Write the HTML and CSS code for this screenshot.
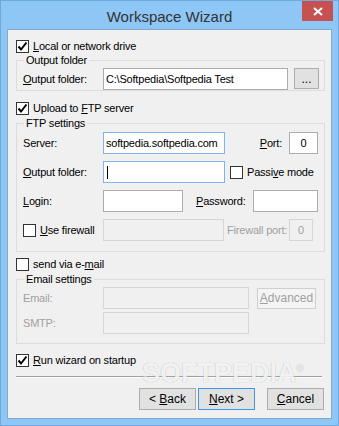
FILE: index.html
```html
<!DOCTYPE html>
<html lang="en">
<head>
  <meta charset="UTF-8">
  <title>Workspace Wizard</title>
  <link rel="stylesheet" href="styles.css">
</head>
<body>
  <div class="window">
    <!-- Title bar -->
    <div class="titlebar">
      <span class="title">Workspace Wizard</span>
      <span class="close">
        <svg width="10" height="9" viewBox="0 0 10 9"><path d="M1 1 L9 8 M9 1 L1 8" stroke="#fff" stroke-width="2"/></svg>
      </span>
    </div>

    <div class="client">
      <!-- Local drive -->
      <div class="check mt-10">
        <span class="box checked"><svg width="11" height="11" viewBox="0 0 11 11"><path d="M1.5 5.5 L4 8.5 L9.5 1.5" fill="none" stroke="#000" stroke-width="2"/></svg></span>
        <span><u>L</u>ocal or network drive</span>
      </div>
      <div class="group mt-7 group-local">
        <span class="legend">Output folder</span>
        <div class="row">
          <span class="lbl"><u>O</u>utput folder:</span>
          <input class="field w-185" type="text" value="C:\Softpedia\Softpedia Test">
          <button class="btn btn-browse">...</button>
        </div>
      </div>

      <!-- FTP -->
      <div class="check mt-11">
        <span class="box checked"><svg width="11" height="11" viewBox="0 0 11 11"><path d="M1.5 5.5 L4 8.5 L9.5 1.5" fill="none" stroke="#000" stroke-width="2"/></svg></span>
        <span>Upload to <u>F</u>TP server</span>
      </div>
      <div class="group mt-8 group-ftp">
        <span class="legend">FTP settings</span>
        <div class="row">
          <span class="lbl">Server:</span>
          <input class="field focus w-122" type="text" value="softpedia.softpedia.com">
          <span class="port-lbl"><u>P</u>ort:</span>
          <input class="field center w-29" type="text" value="0">
        </div>
        <div class="row">
          <span class="lbl"><u>O</u>utput folder:</span>
          <div class="field focus w-122"><span class="caret"></span></div>
          <div class="check passive">
            <span class="box"></span>
            <span>Passi<u>v</u>e mode</span>
          </div>
        </div>
        <div class="row">
          <span class="lbl"><u>L</u>ogin:</span>
          <input class="field w-80" type="text" value="">
          <span class="pw-lbl"><u>P</u>assword:</span>
          <input class="field w-65" type="password" value="">
        </div>
        <div class="row">
          <div class="check lbl">
            <span class="box"></span>
            <span><u>U</u>se firewall</span>
          </div>
          <input class="field w-121" type="text" value="" disabled>
          <span class="fw-lbl disabled">Firewall port:</span>
          <input class="field center w-24" type="text" value="0" disabled>
        </div>
      </div>

      <!-- Email -->
      <div class="check mt-6">
        <span class="box"></span>
        <span>send via e-<u>m</u>ail</span>
      </div>
      <div class="group mt-8 group-mail">
        <span class="legend">Email settings</span>
        <div class="row">
          <span class="lbl disabled">Email:</span>
          <input class="field w-146" type="text" value="" disabled>
          <button class="btn btn-adv" disabled><u>A</u>dvanced</button>
        </div>
        <div class="row">
          <span class="lbl disabled">SMTP:</span>
          <input class="field w-146" type="text" value="" disabled>
        </div>
      </div>

      <div class="check mt-10">
        <span class="box checked"><svg width="11" height="11" viewBox="0 0 11 11"><path d="M1.5 5.5 L4 8.5 L9.5 1.5" fill="none" stroke="#000" stroke-width="2"/></svg></span>
        <span><u>R</u>un wizard on startup</span>
      </div>

      <div class="separator"></div>

      <div class="buttons">
        <button class="btn">&lt; <u>B</u>ack</button>
        <button class="btn btn-default"><u>N</u>ext &gt;</button>
        <button class="btn btn-cancel"><u>C</u>ancel</button>
      </div>

      <div class="watermark">SOFTPEDIA<sup>®</sup></div>
    </div>
  </div>
</body>
</html>
```
FILE: styles.css
```css
/* General */
body {
  margin: 0;
  font-family: "Liberation Sans", Arial, sans-serif;
  font-size: 11px;
  letter-spacing: -0.2px;
  white-space: nowrap;
  color: #000;
}

u {
  text-decoration: underline;
  text-underline-offset: 1px;
}

.window {
  width: 339px;
  height: 426px;
  box-sizing: border-box;
  background-color: #8ec6f6;
  border: 1px solid #70a9de;
  display: flex;
  flex-direction: column;
  position: relative;
}

/* Title bar */
.titlebar {
  height: 28px;
  display: flex;
  align-items: center;
  justify-content: center;
}

.title {
  font-size: 15px;
  letter-spacing: 0;
  color: #333;
  margin-top: 2px;
}

.close {
  position: absolute;
  top: 0;
  right: 5px;
  width: 31px;
  height: 20px;
  background-color: #c75050;
  display: flex;
  align-items: center;
  justify-content: center;
}

/* Client area */
.client {
  flex: 1;
  margin: 0 6px 6px;
  border: 1px solid #83a9cc;
  background-color: #f0f0f0;
  padding: 0 6px 0 8px;
  position: relative;
  overflow: hidden;
}

.mt-6 { margin-top: 6px; }
.mt-7 { margin-top: 7px; }
.mt-8 { margin-top: 8px; }
.mt-10 { margin-top: 10px; }
.mt-11 { margin-top: 11px; }

/* Checkboxes */
.check {
  display: flex;
  align-items: center;
  height: 13px;
  gap: 4px;
  line-height: 13px;
}

.box {
  width: 13px;
  height: 13px;
  box-sizing: border-box;
  border: 1px solid #333;
  background-color: #fff;
  display: flex;
  align-items: center;
  justify-content: center;
  flex-shrink: 0;
}

/* Group boxes */
.group {
  position: relative;
  border: 1px solid #dcdcdc;
  display: flex;
  flex-direction: column;
  padding-left: 6px;
}

.group-local {
  padding-top: 7px;
}

.group-ftp {
  padding-top: 8px;
  padding-bottom: 10px;
  gap: 7px;
}

.group-mail {
  padding-top: 7px;
  padding-bottom: 9px;
  gap: 3px;
}

.legend {
  position: absolute;
  top: -7px;
  left: 7px;
  padding: 0 2px;
  line-height: 13px;
  background-color: #f0f0f0;
}

.row {
  display: flex;
  align-items: center;
  height: 22px;
}

.lbl {
  width: 80px;
  flex-shrink: 0;
}

.disabled {
  color: #a0a0a0;
}

/* Text fields */
.field {
  box-sizing: border-box;
  height: 22px;
  margin: 0;
  border: 1px solid #abadb3;
  background-color: #fff;
  padding: 0 2px;
  font: inherit;
  letter-spacing: inherit;
  color: #000;
  outline: none;
  display: flex;
  align-items: center;
  flex-shrink: 0;
}

.field.focus {
  border-color: #7eb4ea;
}

.field:disabled {
  background-color: #f0f0f0;
  border-color: #d5d5d5;
  color: #a0a0a0;
}

.field.center {
  text-align: center;
}

.caret {
  width: 1px;
  height: 13px;
  margin-left: 1px;
  background-color: #000;
}

.w-24 { width: 24px; }
.w-29 { width: 29px; }
.w-65 { width: 65px; }
.w-80 { width: 80px; }
.w-121 { width: 121px; }
.w-122 { width: 122px; }
.w-146 { width: 146px; }
.w-185 { width: 185px; }

.port-lbl {
  width: 64px;
  padding-right: 7px;
  box-sizing: border-box;
  text-align: right;
  flex-shrink: 0;
}

.pw-lbl {
  width: 70px;
  padding-left: 13px;
  box-sizing: border-box;
  flex-shrink: 0;
}

.fw-lbl {
  width: 65px;
  padding-left: 3px;
  box-sizing: border-box;
  flex-shrink: 0;
}

.passive {
  margin-left: 5px;
}

/* Buttons */
.btn {
  box-sizing: border-box;
  width: 57px;
  height: 22px;
  margin: 0;
  padding: 0;
  border: 1px solid #adadad;
  background-color: #e1e1e1;
  font: inherit;
  font-size: 12px;
  letter-spacing: 0;
  color: #000;
  flex-shrink: 0;
}

.btn-browse {
  width: 25px;
  height: 21px;
  margin-left: 6px;
  margin-bottom: 1px;
}

.btn-adv {
  width: 59px;
  height: 21px;
  margin-left: 8px;
  background-color: #f4f4f4;
  border-color: #cfcfcf;
  color: #a0a0a0;
}

.btn-default {
  border-color: #3d95e3;
}

.separator {
  margin-top: 9px;
  margin-right: 3px;
  border-top: 1px solid #a0a0a0;
  border-bottom: 1px solid #fff;
}

.buttons {
  display: flex;
  justify-content: flex-end;
  gap: 2px;
  margin-top: 10px;
  padding-right: 1px;
}

.btn-cancel {
  margin-left: 10px;
}

/* Watermark */
.watermark {
  position: absolute;
  left: 134px;
  top: 328px;
  font-size: 27px;
  font-weight: bold;
  letter-spacing: 0;
  color: rgba(255, 255, 255, 0.85);
  text-shadow: 0 0 1px rgba(0, 0, 0, 0.3);
  pointer-events: none;
}

.watermark sup {
  font-size: 10px;
}
```
